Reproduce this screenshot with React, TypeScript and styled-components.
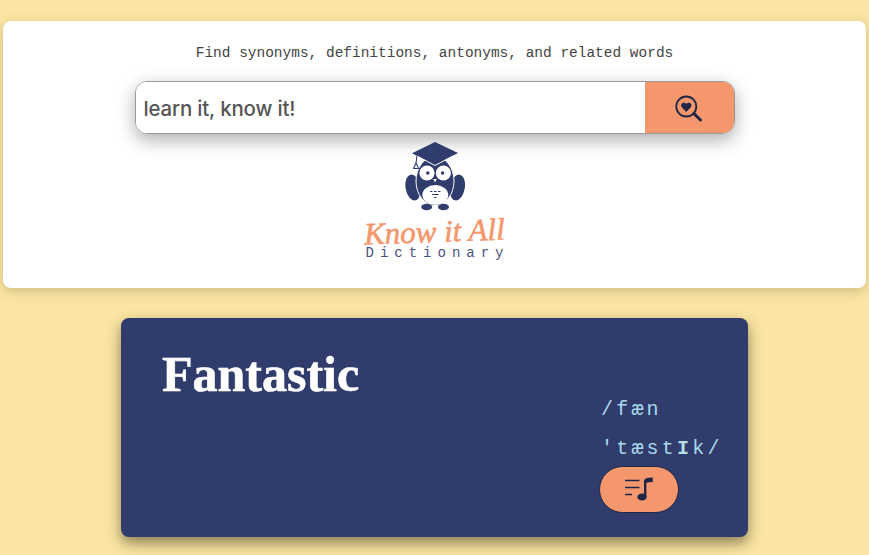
import React from "react";
import styled, { createGlobalStyle } from "styled-components";

const Global = createGlobalStyle`
  html, body { margin: 0; padding: 0; background: #fbe5a3; height: 100%; overflow: hidden; }
  * { box-sizing: border-box; }
`;

const Page = styled.div`
  width: 869px;
  height: 555px;
  padding: 21px 3px 0;
  overflow: hidden;
  background: #fbe5a3;
`;

const Header = styled.header`
  height: 267px;
  background: #fff;
  border-radius: 8px;
  box-shadow: 0 3px 12px rgba(90, 80, 40, 0.28);
  padding-top: 23px;
  display: flex;
  flex-direction: column;
  align-items: center;
`;

const Tagline = styled.p`
  margin: 0;
  font: 14.47px/18px "Liberation Mono", monospace;
  color: #444;
`;

const SearchBar = styled.form`
  margin-top: 19px;
  width: 600px;
  height: 53px;
  display: flex;
  border: 1px solid #999;
  border-radius: 12px;
  overflow: hidden;
  box-shadow: 0 6px 18px rgba(0, 0, 0, 0.32);
`;

const SearchField = styled.div`
  flex: 1;
  background: #fff;
  padding: 2px 0 0 8px;
  display: flex;
  align-items: center;
  font: 500 20.4px "Inter", sans-serif;
  letter-spacing: -0.15px;
  color: #555;
`;

const SearchButton = styled.button`
  width: 89px;
  border: 0;
  padding: 0;
  background: #f4976c;
  display: flex;
  align-items: center;
  justify-content: center;
`;

const Logo = styled.div`
  margin-top: 7px;
  display: flex;
  flex-direction: column;
  align-items: center;
`;

const LogoTitle = styled.div`
  margin-top: 5px;
  font: italic 400 31px/31px "Liberation Serif", serif;
  -webkit-text-stroke: 0.6px #f4976c;
  color: #f4976c;
  transform: rotate(-2deg);
`;

const LogoSub = styled.div`
  font: 14px/14px "Liberation Mono", monospace;
  letter-spacing: 6px;
  margin-right: -6px;
  margin-top: -1px;
  color: #4a5482;
`;

const WordCard = styled.section`
  margin: 30px auto 0;
  width: 627px;
  height: 219px;
  background: #303c6c;
  border-radius: 8px;
  box-shadow: 0 6px 14px rgba(50, 45, 20, 0.55);
  padding: 26px 27px 24px 41px;
  display: flex;
  justify-content: space-between;
`;

const Word = styled.h1`
  margin: 0;
  font: 700 50px/60px "Liberation Serif", serif;
  -webkit-text-stroke: 0.6px #fff;
  color: #fff;
`;

const Side = styled.div`
  width: 120px;
  padding-top: 46px;
`;

const Phonetic = styled.div`
  font: 20px/39px "Liberation Mono", monospace;
  letter-spacing: 3.2px;
  color: #a8d8ea;
`;

const Bold = styled.b`
  color: #b4dfe5;
`;

const PlayButton = styled.button`
  width: 80px;
  height: 47px;
  margin: -2px 0 0 -2px;
  padding: 0;
  border: 1px solid #1f2547;
  border-radius: 24px;
  background: #f4976c;
  display: flex;
  align-items: center;
  justify-content: center;
`;

const SearchHeartIcon = () => (
  <svg width="30" height="30" viewBox="0 0 30 30" fill="none">
    <circle cx="12.3" cy="13.5" r="10" stroke="#1f2547" strokeWidth="1.8" />
    <path d="M12.3 19 L7.6 14 C5.8 11 9.6 8.2 12.3 10.8 C15 8.2 18.8 11 17 14 Z" fill="#1f2547" />
    <path d="M20 20.6 L26.5 27" stroke="#1f2547" strokeWidth="3" strokeLinecap="round" />
  </svg>
);

const MusicIcon = () => (
  <svg width="30" height="26" viewBox="0 0 30 26" fill="none">
    <path d="M1 3.5 H15.5 M1 10.5 H15.5 M1 17.5 H8" stroke="#1f2547" strokeWidth="1.7" />
    <path d="M20 20 V4 C20.4 1.4 23.5 0.6 28.8 0.6 V5 C26 5 23.6 5 22.4 6 V20 Z" fill="#1f2547" />
    <ellipse cx="18" cy="20" rx="4.6" ry="3.6" fill="#1f2547" />
  </svg>
);

const OwlIcon = () => (
  <svg width="60" height="70" viewBox="0 0 60 70">
    <ellipse cx="8" cy="46.5" rx="7.4" ry="13" transform="rotate(-10 8 46.5)" fill="#303c6c" />
    <ellipse cx="52.4" cy="46.5" rx="7.4" ry="13" transform="rotate(10 52.4 46.5)" fill="#303c6c" />
    <ellipse cx="30" cy="40" rx="19" ry="24.5" fill="#303c6c" stroke="#fff" strokeWidth="1" />
    <path d="M7 12.3 L30 24 L53 12 L30 1 Z" fill="#303c6c" />
    <path d="M12 15 L30 24.5 L48 15" fill="none" stroke="#fff" strokeWidth="1" />
    <path d="M12 14.5 L11 22.5" stroke="#303c6c" strokeWidth="1" />
    <path d="M11 22 L8.6 27.5 H13.6 Z" fill="#fff" stroke="#303c6c" strokeWidth="1.1" />
    <circle cx="22" cy="32" r="7.6" fill="#fff" />
    <circle cx="38.4" cy="32" r="7.6" fill="#fff" />
    <circle cx="22.8" cy="32" r="1.8" fill="#303c6c" />
    <circle cx="37.6" cy="32" r="1.8" fill="#303c6c" />
    <path d="M28.2 38 H31.8 L30 41.5 Z" fill="#fff" />
    <ellipse cx="30.3" cy="54" rx="13" ry="10" fill="#fff" />
    <path d="M25 50.5 H27.5 M29 50.5 H31.5 M33 50.5 H35.5 M27 53.5 H33.5 M29 56.5 H31.5" stroke="#303c6c" strokeWidth="1" />
    <ellipse cx="21.7" cy="66" rx="5.5" ry="3.3" fill="#303c6c" />
    <ellipse cx="38.5" cy="66" rx="5.5" ry="3.3" fill="#303c6c" />
  </svg>
);

export default function App() {
  return (
    <Page>
      <Global />
      <Header>
        <Tagline>Find synonyms, definitions, antonyms, and related words</Tagline>
        <SearchBar>
          <SearchField>learn it, know it!</SearchField>
          <SearchButton type="button" aria-label="Search"><SearchHeartIcon /></SearchButton>
        </SearchBar>
        <Logo>
          <OwlIcon />
          <LogoTitle>Know it All</LogoTitle>
          <LogoSub>Dictionary</LogoSub>
        </Logo>
      </Header>
      <WordCard>
        <Word>Fantastic</Word>
        <Side>
          <Phonetic>/fæn 'tæst<Bold>I</Bold>k/</Phonetic>
          <PlayButton type="button" aria-label="Play"><MusicIcon /></PlayButton>
        </Side>
      </WordCard>
    </Page>
  );
}
